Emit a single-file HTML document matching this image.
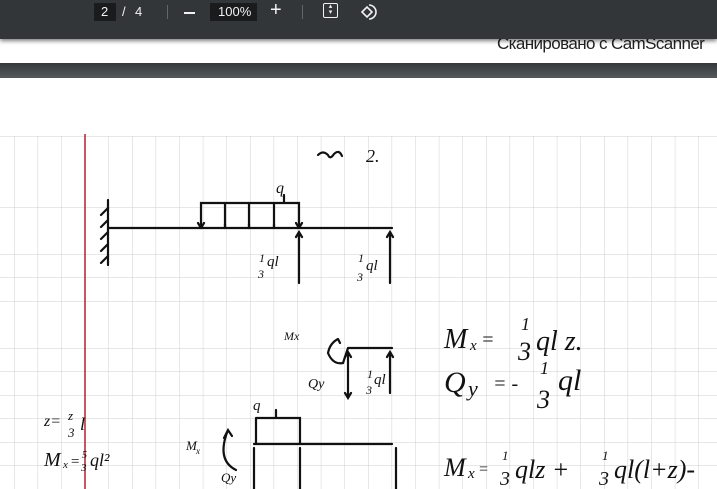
<!DOCTYPE html>
<html><head><meta charset="utf-8"><style>
html,body{margin:0;padding:0;width:717px;height:489px;overflow:hidden;background:#525659;font-family:"Liberation Sans",sans-serif}
.tb{position:absolute;left:0;top:0;width:717px;height:39px;background:#323639;box-shadow:0 2px 4px rgba(0,0,0,.5);z-index:2;color:#f1f1f1;font-size:13px}
.p1{position:absolute;left:0;top:39px;width:717px;height:24px;background:#fff;overflow:hidden}
.p2{position:absolute;left:0;top:78px;width:717px;height:411px;background:#fff}
.gap{position:absolute;left:0;top:63px;width:717px;height:15px;background:linear-gradient(#35383b,#56595c)}
</style></head><body>
<div class="tb">
<div style="position:absolute;left:94px;top:3px;width:22px;height:18px;background:#191b1c"></div>
<span style="position:absolute;left:101px;top:4px">2</span>
<span style="position:absolute;left:122px;top:4px">/</span>
<span style="position:absolute;left:135px;top:4px">4</span>
<div style="position:absolute;left:167px;top:5px;width:1px;height:14px;background:#666"></div>
<div style="position:absolute;left:184px;top:12px;width:11px;height:2px;background:#f1f1f1"></div>
<div style="position:absolute;left:210px;top:3px;width:47px;height:18px;background:#191b1c"></div>
<span style="position:absolute;left:218px;top:4px">100%</span>
<span style="position:absolute;left:270px;top:-1px;font-size:20px">+</span>
<div style="position:absolute;left:302px;top:5px;width:1px;height:14px;background:#666"></div>
<div style="position:absolute;left:323px;top:3px;width:15px;height:15px;border:1.5px solid #f1f1f1;box-sizing:border-box;border-radius:2px;font-size:7px;text-align:center;line-height:6px">▴<br>▾</div>
<svg style="position:absolute;left:358px;top:2px" width="20" height="20" viewBox="0 0 20 20"><path d="M4 10 L9 5 L14 10 L9 15 Z" fill="none" stroke="#f1f1f1" stroke-width="1.6"/><path d="M11 3 A7 7 0 0 1 11 17" fill="none" stroke="#f1f1f1" stroke-width="1.6"/></svg>
</div>
<div class="p1"><span style="position:absolute;left:497px;top:-5px;font-size:17px;color:#222;letter-spacing:-0.6px">Сканировано с CamScanner</span></div>
<div class="gap"></div>
<div class="p2">
<svg width="717" height="411" viewBox="0 78 717 411" style="position:absolute;left:0;top:0">
<defs><pattern id="g" x="14" y="136.5" width="23.6" height="23.5" patternUnits="userSpaceOnUse"><path d="M0 0H23.6M0 0V23.5" stroke="#cfcfcf" stroke-width="1" fill="none"/></pattern></defs>
<rect x="0" y="136" width="717" height="353" fill="url(#g)"/>
<line x1="85" y1="134" x2="85" y2="489" stroke="#b02030" stroke-width="1.5"/>
<g stroke="#111" stroke-width="2.2" fill="none" stroke-linecap="round">
<path d="M108 200V265"/><path d="M108 208l-7 7M108 220l-7 7M108 232l-7 7M108 244l-7 7M108 256l-7 7"/>
<path d="M108 228H392"/>
<path d="M201 228V203H299V228M225 203V228M249 203V228M274 203V228M284 203V195"/>
<path d="M201 228l-3-5M201 228l3-5M225 224v4M249 224v4M274 224v4M299 228l-3-5M299 228l3-5"/>
<path d="M299 232V283M296 237l3-5 3 5M390 232V283M387 237l3-5 3 5"/>
<path d="M348 348H392M348 348l-5 15q-10 2-15-10q2-10 10-14M338 339l2 4"/>
<path d="M348 352V398M345 357l3-5 3 5M345 393l3 5 3-5M390 352V393M387 357l3-5 3 5"/>
<path d="M256 418H300V444M256 418V444M276 418V410"/>
<path d="M254 444H392M254 448V489M300 448V489M396 448V489"/>
<path d="M236 470q-20-10-8-40M224 438l4-8 4 6"/>
<path d="M318 155q5-5 10 0q2 5 6-1q5-5 8 2"/>
</g>
<g font-family="Liberation Serif,serif" font-style="italic" fill="#111">
<text x="276" y="193" font-size="16">q</text>
<text x="366" y="162" font-size="18">2.</text>
<text x="259" y="262" font-size="12">1</text><text x="258" y="278" font-size="12">3</text><text x="267" y="266" font-size="15">ql</text>
<text x="358" y="262" font-size="12">1</text><text x="357" y="281" font-size="12">3</text><text x="366" y="270" font-size="15">ql</text>
<text x="284" y="340" font-size="12">Mx</text>
<text x="308" y="388" font-size="14">Qy</text>
<text x="367" y="378" font-size="12">1</text><text x="366" y="394" font-size="12">3</text><text x="374" y="384" font-size="15">ql</text>
<text x="253" y="410" font-size="15">q</text>
<text x="44" y="426" font-size="16">z= </text><text x="68" y="420" font-size="13">z</text><text x="68" y="437" font-size="13">3</text><text x="80" y="430" font-size="18">l</text>
<text x="44" y="466" font-size="20">M</text><text x="63" y="468" font-size="11">x</text><text x="70" y="466" font-size="15">=</text><text x="82" y="458" font-size="10">5</text><text x="81" y="471" font-size="11">3</text><text x="90" y="466" font-size="18">ql²</text>
<text x="186" y="450" font-size="13">M</text><text x="196" y="454" font-size="9">x</text>
<text x="221" y="482" font-size="13">Qy</text>
<text x="444" y="348" font-size="28">M</text><text x="470" y="350" font-size="15">x</text><text x="481" y="346" font-size="20">=</text>
<text x="521" y="330" font-size="18">1</text><text x="518" y="360" font-size="26">3</text><text x="536" y="350" font-size="28">ql z.</text>
<text x="444" y="392" font-size="30">Q</text><text x="468" y="396" font-size="22">y</text><text x="493" y="390" font-size="20">= -</text>
<text x="540" y="374" font-size="18">1</text><text x="537" y="408" font-size="26">3</text><text x="558" y="390" font-size="30">ql</text>
<text x="444" y="476" font-size="26">M</text><text x="468" y="478" font-size="15">x</text><text x="478" y="474" font-size="16">=</text>
<text x="502" y="460" font-size="13">1</text><text x="500" y="485" font-size="20">3</text><text x="515" y="478" font-size="26">qlz +</text>
<text x="602" y="460" font-size="13">1</text><text x="599" y="485" font-size="20">3</text><text x="614" y="478" font-size="26">ql(l+z)-</text>
</g>
</svg>
</div>
</body></html>
